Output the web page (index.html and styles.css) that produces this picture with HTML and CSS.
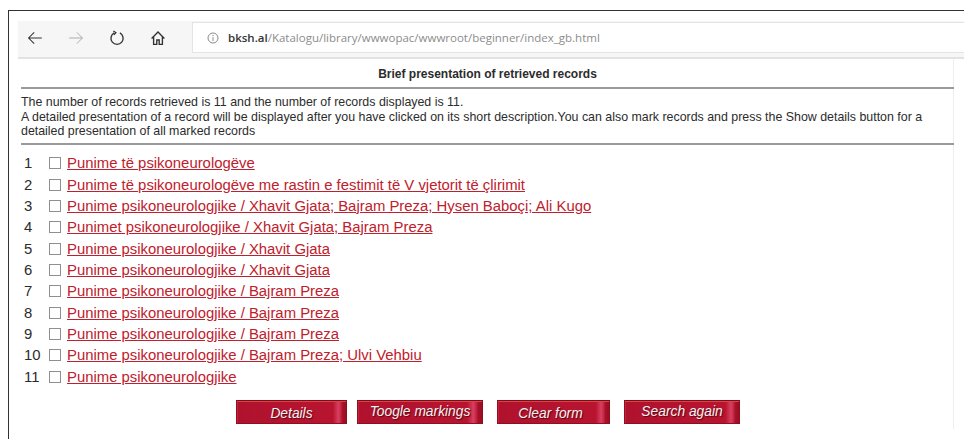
FILE: index.html
```html
<!DOCTYPE html>
<html lang="en">
<head>
<meta charset="utf-8">
<title>Brief presentation of retrieved records</title>
<link rel="stylesheet" href="styles.css">
</head>
<body>
<div class="window">
  <header class="toolbar">
    <div class="nav">
      <svg class="nav-icon" viewBox="0 0 20 20"><path d="M18.5 10H2M9 3L2 10L9 17" fill="none" stroke="#333" stroke-width="1.3"/></svg>
      <svg class="nav-icon" viewBox="0 0 20 20"><path d="M1.5 10H18M11 3L18 10L11 17" fill="none" stroke="#a8a8a8" stroke-width="1.2"/></svg>
      <svg class="nav-icon" viewBox="0 0 20 20"><path d="M6.5 3.6A7.6 7.6 0 1 0 13.6 3.6" fill="none" stroke="#333" stroke-width="1.7"/><path d="M5.4 1.2L8.6 3.2L6.2 6" fill="none" stroke="#333" stroke-width="1.6"/></svg>
      <svg class="nav-icon" viewBox="0 0 20 20"><path d="M2 10.5L10 2.5L18 10.5M4.5 8.5V18H8.5V12.5H11.5V18H15.5V8.5" fill="none" stroke="#333" stroke-width="1.7"/></svg>
    </div>
    <div class="address">
      <svg class="info" viewBox="0 0 12 12"><circle cx="6" cy="6" r="5" fill="none" stroke="#8a8a8a"/><path d="M6 5.2V9M6 3V4.2" stroke="#8a8a8a"/></svg>
      <span class="url"><b>bksh.al</b>/Katalogu/library/wwwopac/wwwroot/beginner/index_gb.html</span>
    </div>
  </header>
  <main class="page">
    <h1 class="title">Brief presentation of retrieved records</h1>
    <div class="intro">
      The number of records retrieved is 11 and the number of records displayed is 11.<br>
      A detailed presentation of a record will be displayed after you have clicked on its short description.You can also mark records and press the Show details button for a detailed presentation of all marked records
    </div>
    <ol class="records">
      <li class="record"><span class="num">1</span><span class="box"></span><a href="#">Punime të psikoneurologëve</a></li>
      <li class="record"><span class="num">2</span><span class="box"></span><a href="#">Punime të psikoneurologëve me rastin e festimit të V vjetorit të çlirimit</a></li>
      <li class="record"><span class="num">3</span><span class="box"></span><a href="#">Punime psikoneurologjike / Xhavit Gjata; Bajram Preza; Hysen Baboçi; Ali Kugo</a></li>
      <li class="record"><span class="num">4</span><span class="box"></span><a href="#">Punimet psikoneurologjike / Xhavit Gjata; Bajram Preza</a></li>
      <li class="record"><span class="num">5</span><span class="box"></span><a href="#">Punime psikoneurologjike / Xhavit Gjata</a></li>
      <li class="record"><span class="num">6</span><span class="box"></span><a href="#">Punime psikoneurologjike / Xhavit Gjata</a></li>
      <li class="record"><span class="num">7</span><span class="box"></span><a href="#">Punime psikoneurologjike / Bajram Preza</a></li>
      <li class="record"><span class="num">8</span><span class="box"></span><a href="#">Punime psikoneurologjike / Bajram Preza</a></li>
      <li class="record"><span class="num">9</span><span class="box"></span><a href="#">Punime psikoneurologjike / Bajram Preza</a></li>
      <li class="record"><span class="num">10</span><span class="box"></span><a href="#">Punime psikoneurologjike / Bajram Preza; Ulvi Vehbiu</a></li>
      <li class="record"><span class="num">11</span><span class="box"></span><a href="#">Punime psikoneurologjike</a></li>
    </ol>
    <div class="actions">
      <button class="action action-details" type="button">Details</button>
      <button class="action action-toggle" type="button">Toogle markings</button>
      <button class="action action-clear" type="button">Clear form</button>
      <button class="action action-search" type="button">Search again</button>
    </div>
  </main>
</div>
</body>
</html>
```
FILE: styles.css
```css
* { box-sizing: border-box; }

html, body { margin: 0; height: 100%; overflow: hidden; background: #fff; }

body {
  padding: 10px 0 0 8px;
  font-family: "Liberation Sans", Arial, sans-serif;
  color: #2c2c2c;
}

.window {
  height: 429px;
  padding: 10px 0 0 9px;
  border-top: 1px solid #333;
  border-left: 1px solid #333;
}

.toolbar {
  display: flex;
  align-items: flex-start;
  height: 38px;
  padding-top: 1px;
  background: #f6f6f6;
  border-bottom: 2px solid #e2e2e2;
}

.nav {
  display: flex;
  align-items: center;
  gap: 25px;
  width: 174px;
  height: 31px;
  padding-left: 9px;
}

.nav-icon { width: 16px; height: 16px; flex: none; }

.address {
  display: flex;
  align-items: center;
  flex: 1;
  height: 31px;
  padding-left: 14px;
  background: #fff;
  border: 1px solid #e4e4e4;
  border-right: 0;
}

.info { width: 12px; height: 12px; flex: none; }

.url {
  margin-left: 9px;
  font-family: "Open Sans", sans-serif;
  font-size: 11.5px;
  color: #8c8c8c;
}

.url b { font-weight: 600; color: #333; }

.page {
  width: 936px;
  height: 370px;
  padding: 8px 0 0 3px;
  border-right: 1px solid #eee;
}

.title {
  margin: 0;
  padding-bottom: 6px;
  border-bottom: 2px solid #999;
  width: 933px;
  font-size: 12px;
  line-height: 14px;
  font-weight: 700;
  text-align: center;
}

.intro {
  width: 933px;
  padding: 6px 0 4px;
  border-bottom: 2px solid #999;
  font-size: 12.4px;
  line-height: 14.5px;
}

.records {
  margin: 0;
  padding: 8px 0 0;
  list-style: none;
}

.record {
  display: flex;
  align-items: center;
  height: 21.35px;
  font-size: 14.88px;
}

.num { width: 28px; padding-left: 3px; }

.box {
  width: 12px;
  height: 12px;
  margin-right: 6px;
  background: #fff;
  border: 1px solid #8f8f8f;
}

.record a { color: #c0202c; text-decoration: underline; }

.actions {
  display: flex;
  margin-top: 13px;
  padding-left: 215px;
}

.action {
  height: 24px;
  padding: 0;
  font-family: "Liberation Sans", Arial, sans-serif;
  font-size: 13.8px;
  font-style: italic;
  color: #f2f2f2;
  text-shadow: 1px 1px 1px #5a0710;
  border: 1px solid #8c1020;
  border-top-color: #7a0c1c;
  box-shadow: inset 0 1px 0 #e04040, inset 1px 0 0 #c8203c;
  background: linear-gradient(90deg, #b0122e 0, #b81430 88%, #d84060 93%, #c42a48 95%, #a80f28 97%, #9c0e22 100%);
}

.action-details { width: 111px; margin-right: 10px; padding-top: 2px; }
.action-toggle  { width: 126px; margin-right: 14px; padding-bottom: 2px; }
.action-clear   { width: 113px; margin-right: 14px; padding: 2px 6px 0 0; }
.action-search  { width: 116px; padding-bottom: 2px; }
```
